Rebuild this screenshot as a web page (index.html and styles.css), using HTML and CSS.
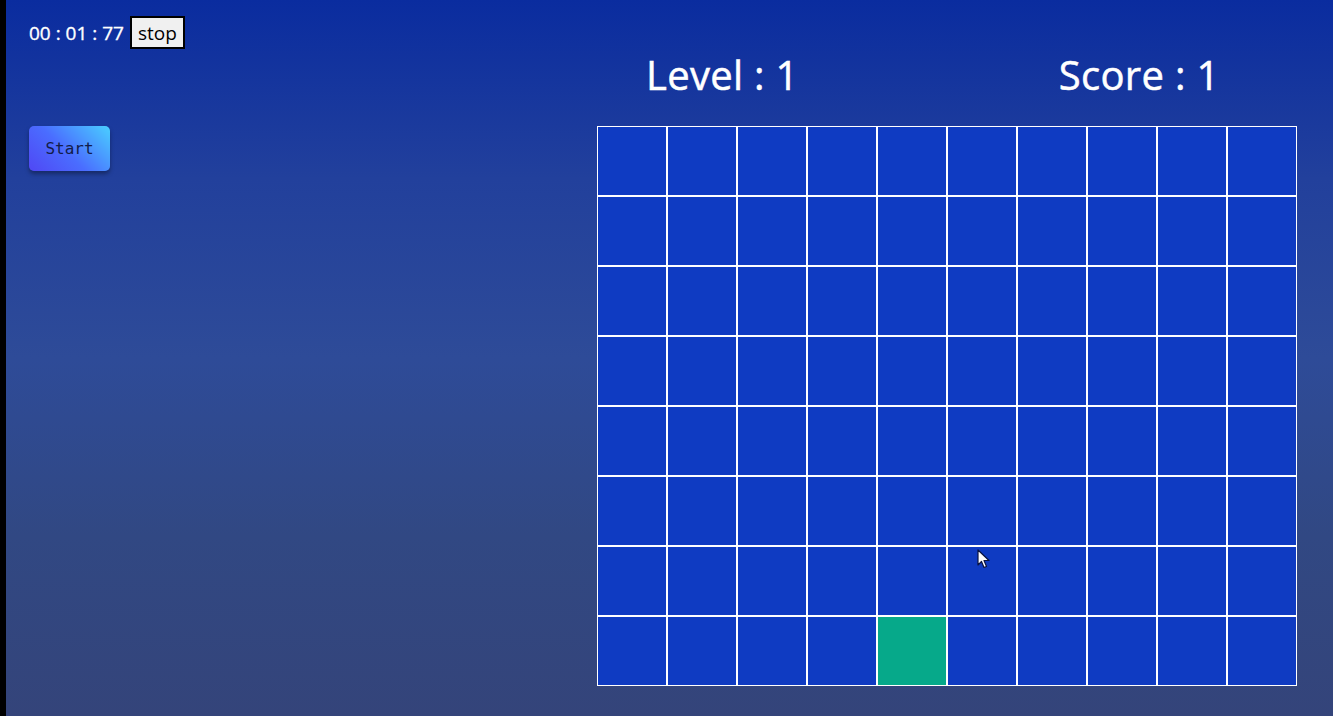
FILE: index.html
```html
<!DOCTYPE html>
<html lang="en">
<head>
    <meta charset="UTF-8">
    <meta name="viewport" content="width=device-width, initial-scale=1.0">
    <title>Grid Game</title>
    <link rel="stylesheet" href="styles.css">
</head>
<body>
    <div id="page">
        <div id="side">
            <div class="timer-row">
                <span id="timer">00 : 01 : 77</span>
                <button class="stop-btn">stop</button>
            </div>
            <button class="start-btn">Start</button>
        </div>

        <div id="game">
            <div class="stats">
                <h2 class="stat">Level : 1</h2>
                <h2 class="stat">Score : 1</h2>
            </div>
            <div id="board"></div>
        </div>

        <svg class="cursor" width="14" height="20" viewBox="0 0 14 20">
            <path d="M1 1 L1 16 L4.5 12.5 L7 18.5 L9.5 17.5 L7 11.5 L12 11.5 Z" fill="#fff" stroke="#0a1440" stroke-width="1.2" stroke-linejoin="round"/>
        </svg>
    </div>

    <script>
        var board = document.getElementById('board');
        for (var i = 0; i < 80; i++) {
            var cell = document.createElement('div');
            cell.className = 'cell';
            if (i === 74) {
                cell.className += ' active';
            }
            board.appendChild(cell);
        }
    </script>
</body>
</html>
```

FILE: styles.css
```css
html, body {
    margin: 0;
    height: 100%;
    background-color: #000;
}
body {
    font-family: "Open Sans", Arial, sans-serif;
    overflow: hidden;
}
#page {
    position: relative;
    display: flex;
    height: 100%;
    margin-left: 6px;
    padding: 16px 0 0 23px;
    box-sizing: border-box;
    background: linear-gradient(180deg, #0a2c9f 0%, #22409c 25%, #2e4b98 50%, #314883 75%, #34447a 100%);
}
#side {
    width: 568px;
    display: flex;
    flex-direction: column;
    align-items: flex-start;
}
.timer-row {
    display: flex;
    align-items: center;
    gap: 6px;
}
#timer {
    color: #fff;
    font-size: 19px;
    -webkit-text-stroke: 0.35px #fff;
}
.stop-btn {
    height: 33px;
    width: 55px;
    padding: 0;
    font-family: "Open Sans", Arial, sans-serif;
    font-size: 19px;
    color: #000;
    background-color: #f0f0f0;
    border: 2px solid #000;
}
.start-btn {
    margin-top: 77px;
    width: 81px;
    height: 45px;
    font-family: "DejaVu Sans Mono", monospace;
    font-size: 16px;
    color: #121c4a;
    background: linear-gradient(45deg, #5047f4 0%, #4a6dff 45%, #4acfff 100%);
    border: none;
    border-radius: 5px;
    box-shadow: 0 3px 4px rgba(0, 0, 0, 0.35);
}
#game {
    width: 700px;
}
.stats {
    display: flex;
    gap: 260px;
    margin-top: 32px;
    padding-left: 49px;
}
.stat {
    margin: 0;
    color: #fff;
    font-size: 40px;
    font-weight: 500;
    line-height: 54px;
    -webkit-text-stroke: 0.5px #fff;
    letter-spacing: 0.3px;
}
#board {
    margin-top: 24px;
    display: grid;
    grid-template-columns: repeat(10, 70px);
    grid-auto-rows: 70px;
}
.cell {
    box-sizing: border-box;
    border: 1px solid #fff;
    background-color: #0f3bc2;
}
.cell.active {
    background-color: #06a98a;
}
.cursor {
    position: absolute;
    left: 971px;
    top: 549px;
}
```
